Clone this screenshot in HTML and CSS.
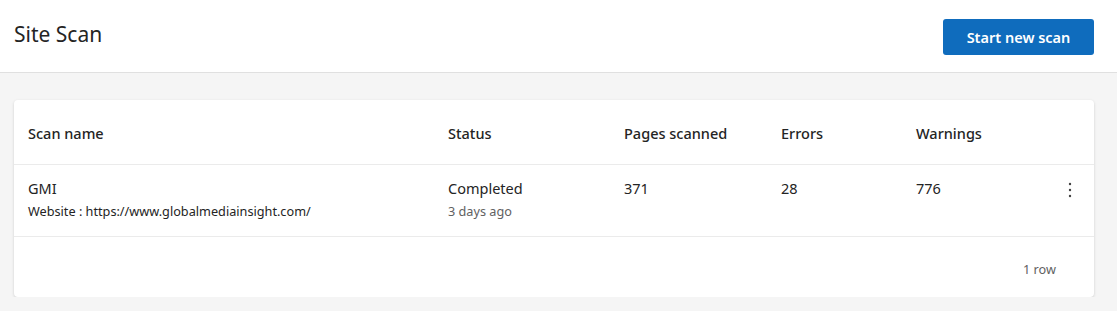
FILE: index.html
```html
<!DOCTYPE html>
<html lang="en">
  <head>
    <meta charset="UTF-8">
    <title>Site Scan</title>
    <link rel="stylesheet" href="styles.css">
  </head>
  <body>
    <header class="page-header">
      <h1>Site Scan</h1>
      <button class="primary-btn">Start new scan</button>
    </header>

    <main class="content">
      <div class="card">
        <div class="row head">
          <div>Scan name</div>
          <div>Status</div>
          <div>Pages scanned</div>
          <div>Errors</div>
          <div>Warnings</div>
          <div></div>
        </div>
        <div class="row item">
          <div>
            <div class="name">GMI</div>
            <div class="sub">Website : https://www.globalmediainsight.com/</div>
          </div>
          <div>
            <div>Completed</div>
            <div class="sub muted">3 days ago</div>
          </div>
          <div>371</div>
          <div>28</div>
          <div>776</div>
          <div class="more">
            <svg width="4" height="16" viewBox="0 0 4 16">
              <circle cx="2" cy="2" r="1.2" fill="#424242"/>
              <circle cx="2" cy="8" r="1.2" fill="#424242"/>
              <circle cx="2" cy="14" r="1.2" fill="#424242"/>
            </svg>
          </div>
        </div>
        <div class="footer">1 row</div>
      </div>
    </main>
  </body>
</html>
```

FILE: styles.css
```css
body {
  margin: 0;
  font-family: 'Noto Sans', 'Open Sans', sans-serif;
  background-color: #f5f5f5;
  color: #242424;
}

.page-header {
  display: flex;
  align-items: center;
  justify-content: space-between;
  height: 73px;
  box-sizing: border-box;
  padding: 0 23px 0 14px;
  background-color: #fff;
  border-bottom: 1px solid #e0e0e0;
}

h1 {
  margin: 0 0 5px;
  font-size: 21px;
  font-weight: 400;
  color: #242424;
}

.primary-btn {
  width: 151px;
  height: 36px;
  margin-top: 2px;
  background-color: #0f6cbd;
  color: #fff;
  border: none;
  border-radius: 3px;
  font-family: inherit;
  font-size: 14.5px;
  font-weight: 600;
  cursor: pointer;
}

.content {
  padding: 27px 23px 0 14px;
}

.card {
  background-color: #fff;
  border-radius: 4px;
  box-shadow: 0 1px 3px rgba(0, 0, 0, 0.16);
}

.row {
  display: grid;
  grid-template-columns: 420px 176px 157px 135px 1fr 30px;
  padding-left: 14px;
  border-bottom: 1px solid #ebebeb;
  font-size: 14.5px;
}

.row.head {
  height: 65px;
  box-sizing: border-box;
  padding-top: 2px;
  align-items: center;
  font-weight: 500;
}

.row.item {
  height: 72px;
  box-sizing: border-box;
  padding-top: 13px;
}

.sub {
  font-size: 12.7px;
  margin-top: 4px;
}

.muted {
  color: #616161;
}

.more {
  padding-top: 4px;
  padding-left: 4px;
}

.footer {
  height: 60px;
  box-sizing: border-box;
  padding: 4px 38px 0 0;
  display: flex;
  align-items: center;
  justify-content: flex-end;
  font-size: 12.7px;
  color: #616161;
}
```
